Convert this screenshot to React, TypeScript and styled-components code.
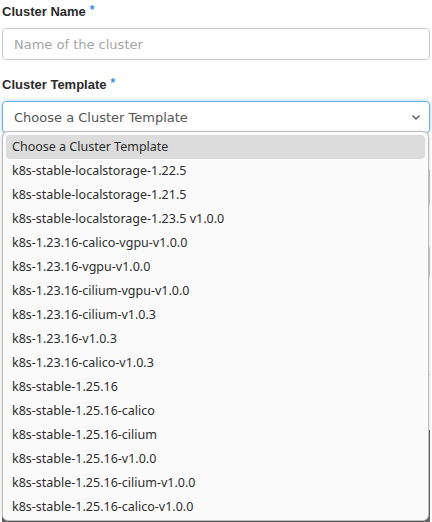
import styled, { createGlobalStyle } from 'styled-components';

const GlobalStyle = createGlobalStyle`
  html, body {
    margin: 0;
    padding: 0;
    background: #ffffff;
  }
  body {
    font-family: "Liberation Sans", Arial, sans-serif;
    color: #333333;
  }
`;

const templates = [
  'Choose a Cluster Template',
  'k8s-stable-localstorage-1.22.5',
  'k8s-stable-localstorage-1.21.5',
  'k8s-stable-localstorage-1.23.5 v1.0.0',
  'k8s-1.23.16-calico-vgpu-v1.0.0',
  'k8s-1.23.16-vgpu-v1.0.0',
  'k8s-1.23.16-cilium-vgpu-v1.0.0',
  'k8s-1.23.16-cilium-v1.0.3',
  'k8s-1.23.16-v1.0.3',
  'k8s-1.23.16-calico-v1.0.3',
  'k8s-stable-1.25.16',
  'k8s-stable-1.25.16-calico',
  'k8s-stable-1.25.16-cilium',
  'k8s-stable-1.25.16-v1.0.0',
  'k8s-stable-1.25.16-cilium-v1.0.0',
  'k8s-stable-1.25.16-calico-v1.0.0',
];

const Page = styled.div`
  position: relative;
  width: 432px;
  height: 522px;
  overflow: hidden;
`;

const Form = styled.div`
  display: flex;
  flex-direction: column;
  padding: 3px 2px 0 2px;
`;

const Field = styled.div`
  display: flex;
  flex-direction: column;
  margin-bottom: 16px;
`;

const Label = styled.label`
  font-size: 13px;
  font-weight: bold;
  color: #2b2b2b;
  line-height: 18px;
  margin-bottom: 7px;
`;

const Required = styled.span`
  color: #3b8fd6;
  margin-left: 4px;
  font-size: 12px;
  vertical-align: top;
  line-height: 14px;
`;

const TextInput = styled.input`
  box-sizing: border-box;
  height: 32px;
  width: 100%;
  border: 1px solid #cccccc;
  border-radius: 4px;
  padding: 0 11px;
  font-family: "DejaVu Sans", sans-serif;
  font-size: 13px;
  color: #333333;
  outline: none;
  &::placeholder {
    color: #a5a5a5;
  }
`;

const SelectBox = styled.div<{ focused?: boolean }>`
  box-sizing: border-box;
  height: 32px;
  display: flex;
  align-items: center;
  justify-content: space-between;
  border: 1px solid ${(p) => (p.focused ? '#66afe9' : '#cccccc')};
  border-radius: 4px;
  padding: 0 8px 0 11px;
  font-family: "DejaVu Sans", sans-serif;
  font-size: 13px;
  color: #555555;
  box-shadow: ${(p) => (p.focused ? '0 0 4px rgba(102,175,233,0.6)' : 'none')};
`;

const HiddenBlock = styled.div<{ h: number; top: number }>`
  box-sizing: border-box;
  height: ${(p) => p.h}px;
  margin-top: ${(p) => p.top}px;
  border: 1px solid #cccccc;
  border-radius: 4px;
`;

const Rule = styled.hr`
  margin: 95px 0 0 0;
  border: none;
  border-top: 1px solid #dddddd;
`;

const Footer = styled.div`
  margin-top: 55px;
  height: 100px;
  background: #6a6a6a;
`;

const Popup = styled.ul`
  position: absolute;
  left: 2px;
  top: 131px;
  width: 427px;
  height: 390px;
  box-sizing: border-box;
  margin: 0;
  padding: 3px 3px;
  list-style: none;
  background: #fafafa;
  border: 1px solid #bdbdbd;
  border-radius: 6px;
  box-shadow: 0 1px 3px rgba(0, 0, 0, 0.25);
  font-family: "Noto Sans", "Open Sans", sans-serif;
  font-size: 12.5px;
  color: #2e2e2e;
`;

const Option = styled.li<{ active?: boolean }>`
  height: 24px;
  line-height: 24px;
  padding: 0 6px;
  border-radius: 4px;
  background: ${(p) => (p.active ? '#dcdcdc' : 'transparent')};
  white-space: nowrap;
`;

function Chevron() {
  return (
    <svg width="10" height="10" viewBox="0 0 10 10">
      <path d="M1.5 3.5 L5 7 L8.5 3.5" fill="none" stroke="#555" strokeWidth="1.3" />
    </svg>
  );
}

export default function App() {
  return (
    <>
      <GlobalStyle />
      <Page>
        <Form>
          <Field>
            <Label>
              Cluster Name<Required>*</Required>
            </Label>
            <TextInput placeholder="Name of the cluster" />
          </Field>
          <Field>
            <Label>
              Cluster Template<Required>*</Required>
            </Label>
            <SelectBox focused>
              <span>Choose a Cluster Template</span>
              <Chevron />
            </SelectBox>
          </Field>
          <HiddenBlock h={40} top={18} />
          <HiddenBlock h={34} top={38} />
          <Rule />
          <Footer />
        </Form>
        <Popup>
          {templates.map((t, i) => (
            <Option key={t} active={i === 0}>
              {t}
            </Option>
          ))}
        </Popup>
      </Page>
    </>
  );
}
